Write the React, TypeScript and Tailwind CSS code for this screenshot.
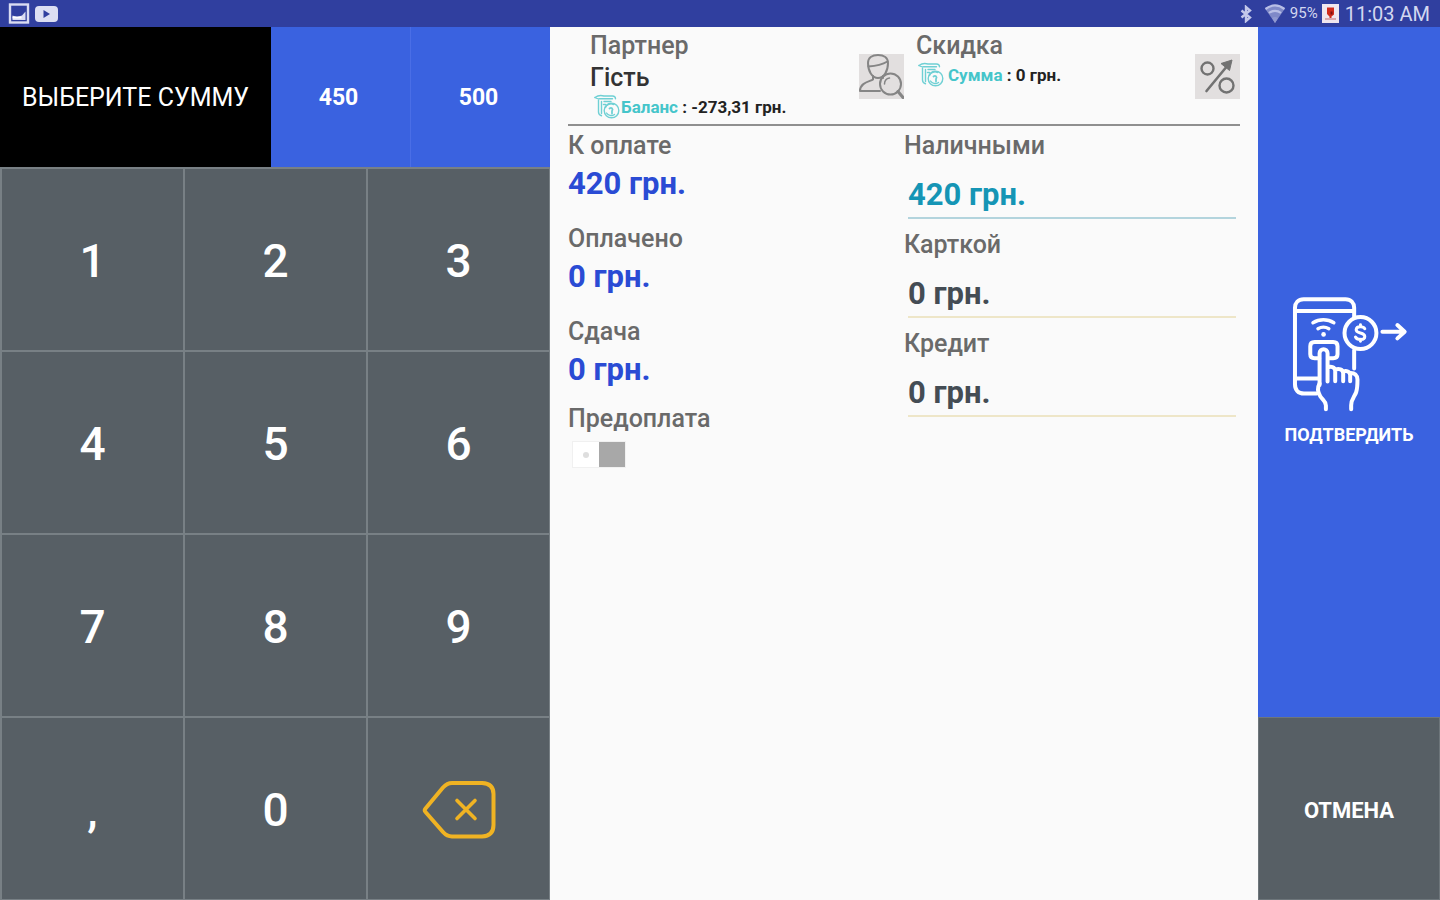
import { useState } from "react";

const keyClass =
  "flex items-center justify-center bg-[#575f65] pt-0.5 text-[46px] leading-none font-medium text-white";

const labelClass = "text-[25px] leading-8 font-medium text-[#6a6a6a]";

function StatusBar() {
  return (
    <header className="flex h-[27px] items-center justify-between bg-[#303f9f] pr-2.5 pl-2 text-[#d3d7f0]">
      <div className="flex items-center gap-1">
        <svg width="22" height="21" viewBox="0 0 22 21" aria-hidden="true">
          <rect x="2" y="1.5" width="18" height="18" fill="none" stroke="#d9dcf2" strokeWidth="2.4" />
          <path d="M4.5 12.5 9 14l5-1.5 3.5-4V17h-13Z" fill="#d9dcf2" />
          <path d="M4.500 14.500h9" stroke="#fff" strokeWidth="2" />
        </svg>
        <svg width="25" height="18" viewBox="0 0 25 18" aria-hidden="true">
          <rect x="1" y="1" width="23" height="16" rx="4" fill="#dcdff3" />
          <path d="M9.500 5v8l6.500-4Z" fill="#303f9f" />
        </svg>
      </div>
      <div className="flex items-center">
        <svg className="mr-2.5" width="16" height="18" viewBox="0 0 16 18" aria-hidden="true">
          <path d="M3.500 5.500 12 12.500 8 16V2l4 3.500-8.500 7" fill="none" stroke="#c3c8ea" strokeWidth="2.400" />
        </svg>
        <svg className="mr-1" width="22" height="20" viewBox="0 0 22 20" aria-hidden="true">
          <path d="M1 4.500C7-.2 15-.2 21 4.500L11 19Z" fill="#7f89c8" />
          <path d="M1.500 5C7.500.5 14.500.5 20.500 5M5 9c3.500-2.800 8.500-2.800 12 0" fill="none" stroke="#b9bfe6" strokeWidth="2.200" />
          <path d="M8 14c2-1.400 4-1.400 6 0l-3 5Z" fill="#8f98d0" />
        </svg>
        <span className="mr-1 text-[15px]">95%</span>
        <svg className="mr-1.5" width="17" height="19" viewBox="0 0 17 19" aria-hidden="true">
          <rect width="17" height="19" fill="#efe6ee" />
          <path d="M5 3.500h7v7l-2.500 2v3h-2v-3L5 10Z" fill="#d02a1c" />
          <path d="M3 14h11v2H3Z" fill="#d9a7ae" />
          <path d="M8.500 7.500h2v3h-2Z" fill="#7a1010" />
        </svg>
        <span className="text-[20px]">11:03 AM</span>
      </div>
    </header>
  );
}

function CoinsIcon() {
  return (
    <svg width="26" height="26" viewBox="0 0 26 26" fill="none" stroke="#6fd0d4" strokeWidth="1.400" strokeLinecap="round" aria-hidden="true">
      <path d="M1 3.500C4 1.200 7 1 10 2h8.500c1.800 0 3 1 3 2.800" />
      <path d="M1 3.500c1.500 1 3 1.500 4.500 1.300h13" />
      <path d="M4.500 6v12c0 2 1 3.200 3 3.700M7.500 7.500v12M10 7.500h7M9.500 10.500h2" />
      <circle cx="17.500" cy="16.500" r="7.300" />
      <path d="M11.500 13.500c1-3 5-4.500 8-3M12.500 19c1.500 2.500 5 3.500 8 1.500" />
      <path d="M15.500 14.500c2-1.500 4 .5 2.500 2.500v2.500" strokeWidth="1.800" />
    </svg>
  );
}

function FindPersonIcon() {
  return (
    <svg width="45" height="45" viewBox="0 0 45 45" fill="none" stroke="#858585" strokeWidth="2" strokeLinecap="round" strokeLinejoin="round" aria-hidden="true">
      <path d="M9 9C9 4 13 1 19 1s10 3 10 8c0 8-4 15-10 15S9 17 9 9Z" />
      <path d="M9.500 12.500c7-.5 13-1.500 19-5" />
      <path d="M14 22v3.500c-3 2-13 3-13 11.500h20M24 22v2" />
      <circle cx="31.500" cy="30" r="10.500" />
      <path d="M25.500 30c0-3 2-5.500 5-6" strokeWidth="1.500" />
      <path d="m39 37.500 5 6" strokeWidth="3" />
    </svg>
  );
}

function DiscountIcon() {
  return (
    <svg width="45" height="45" viewBox="0 0 45 45" fill="none" stroke="#727272" aria-hidden="true">
      <circle cx="12.500" cy="14.500" r="6" strokeWidth="2.400" />
      <circle cx="31.500" cy="31.500" r="7" strokeWidth="2.400" />
      <path d="M11.500 37 33 11" strokeWidth="2.600" strokeLinecap="round" />
      <path d="M37 6 26 9.500l8.500 7Z" fill="#727272" />
    </svg>
  );
}

function PayIcon() {
  return (
    <svg width="123" height="120" viewBox="90 40 370 360" fill="none" stroke="#fff" strokeWidth="12" strokeLinecap="round" strokeLinejoin="round" aria-hidden="true">
      <path d="M289 112V84c0-15-10-26-26-26H137c-16 0-26 11-26 26v230c0 17 10 28 27 28h38" />
      <path d="M111 94h178M111 297h69M289 212v55" />
      <path d="M165 129c19-12 44-12 63 0M180 147c10-6 23-6 33 0" strokeWidth="10" />
      <circle cx="197" cy="164" r="7" fill="#fff" stroke="none" />
      <path d="M184 236h-14c-9 0-13-4-13-12v-24c0-9 4-13 13-13h56c9 0 13 4 13 13v24c0 8-4 12-13 12h-14" />
      <path d="M185 316V221c0-16 24-16 24 0v85M209 264c10-5 22-2 23 9v32M232 270c11-5 23-1 24 10v25M256 276c10-4 20 0 21 10v19M277 280c13-1 22 7 22 20 0 14 0 27-4 38-5 13-15 21-15 39v12" />
      <path d="M185 312c-7 12-6 25 2 38 7 11 17 14 17 28v11" />
      <circle cx="308" cy="160" r="48" />
      <path d="M321 147c-4-7-25-9-26 3-1 13 26 7 26 20 0 12-23 12-28 2M308 135v6M308 179v6" strokeWidth="9" />
      <path d="M374 156h65M419 136l22 20-22 20" />
    </svg>
  );
}

function BackspaceIcon() {
  return (
    <svg width="74" height="60" viewBox="0 0 74 60" fill="none" stroke="#f0b323" strokeLinecap="round" strokeLinejoin="round" aria-hidden="true">
      <path d="M3.500 28.500 21 7.500Q25 3 30 3h30Q71.500 3.500 71.500 14v31Q71.500 56 60 56.500H30q-5 0-9-4.500L3.500 32q-1.500-1.700 0-3.500Z" strokeWidth="4" />
      <path d="m35 20.500 18 18M53 20.500l-18 18" strokeWidth="3.600" />
    </svg>
  );
}

function Total({ label, value }: { label: string; value: string }) {
  return (
    <div>
      <dt className={labelClass}>{label}</dt>
      <dd className="text-[31px] leading-[44px] font-bold text-[#2a4bd4]">{value}</dd>
    </div>
  );
}

function Field({ id, label, initial, tone }: { id: string; label: string; initial: string; tone: string }) {
  const [value, setValue] = useState(initial);
  return (
    <div className="flex flex-col">
      <label htmlFor={id} className={labelClass}>
        {label}
      </label>
      <input
        id={id}
        value={value}
        onChange={(e) => setValue(e.target.value)}
        className={"mx-1 h-[57px] min-w-0 border-b-2 bg-transparent pt-2.5 text-[31px] font-bold outline-none " + tone}
      />
    </div>
  );
}

export default function App() {
  const [prepay, setPrepay] = useState(false);
  return (
    <div className="flex min-h-screen flex-col bg-[#fafafa] font-[Roboto,sans-serif]">
      <StatusBar />
      <main className="grid flex-1 grid-cols-[275fr_354fr_91fr]">
        <section className="flex flex-col">
          <div className="grid h-[140px] grid-cols-[271fr_140fr_139fr] bg-[#3a62e0] text-white">
            <h1 className="flex items-center justify-center bg-black pt-0.5 text-[25px] whitespace-nowrap">ВЫБЕРИТЕ СУММУ</h1>
            <button className="border-r border-[#4a6ee6] pt-0.5 pr-1 text-[23px] font-bold">450</button>
            <button className="pt-0.5 pr-1 text-[23px] font-bold">500</button>
          </div>
          <div className="grid flex-1 grid-cols-3 grid-rows-4 gap-0.5 bg-[#788085] p-0.5 pr-px pb-px">
            {["1", "2", "3", "4", "5", "6", "7", "8", "9", ",", "0"].map((k) => (
              <button key={k} className={keyClass}>
                {k}
              </button>
            ))}
            <button className={keyClass} aria-label="Удалить">
              <BackspaceIcon />
            </button>
          </div>
        </section>

        <section className="px-[18px] pt-[3px]">
          <div className="grid grid-cols-2 border-b-2 border-[#8f8f8f] pb-1">
            <div className="flex items-start justify-between pl-[22px]">
              <div>
                <h2 className={labelClass}>Партнер</h2>
                <p className="text-[25px] leading-8 font-medium text-[#333]">Гість</p>
                <p className="flex h-[26px] items-center gap-px pl-1 text-[17px] leading-6 font-bold text-[#222]">
                  <CoinsIcon />
                  <span>
                    <span className="text-[#45c5ca]">Баланс</span> : -273,31 грн.
                  </span>
                </p>
              </div>
              <button className="mt-6 bg-[#e2dfdf]" aria-label="Найти партнера">
                <FindPersonIcon />
              </button>
            </div>
            <div className="flex items-start justify-between pl-3">
              <div>
                <h2 className={labelClass}>Скидка</h2>
                <p className="flex h-[26px] items-center gap-1 pl-0.5 text-[17px] leading-6 font-bold text-[#222]">
                  <CoinsIcon />
                  <span>
                    <span className="text-[#45c5ca]">Сумма</span> : 0 грн.
                  </span>
                </p>
              </div>
              <button className="mt-6 bg-[#e2dfdf]" aria-label="Выбрать скидку">
                <DiscountIcon />
              </button>
            </div>
          </div>

          <div className="grid grid-cols-2 pt-1">
            <div>
              <dl className="flex flex-col gap-[17px]">
                <Total label="К оплате" value="420 грн." />
                <Total label="Оплачено" value="0 грн." />
                <Total label="Сдача" value="0 грн." />
              </dl>
              <div className="mt-[11px] flex flex-col items-start">
                <label htmlFor="prepay" className={labelClass}>
                  Предоплата
                </label>
                <div className="mt-1.5 ml-1 flex">
                  <input
                    id="prepay"
                    type="checkbox"
                    role="switch"
                    checked={prepay}
                    onChange={(e) => setPrepay(e.target.checked)}
                    className="grid h-[27px] w-[54px] appearance-none grid-cols-2 place-items-center border border-[#f0f0f0] bg-white bg-[linear-gradient(#a8a8a8,#a8a8a8)] bg-[length:50%_100%] bg-right bg-no-repeat before:size-1.5 before:rounded-full before:bg-[#dedede] checked:bg-left"
                  />
                </div>
              </div>
            </div>
            <div className="flex flex-col gap-2.5">
              <Field id="cash" label="Наличными" initial="420 грн." tone="border-[#b3d4dd] text-[#1595b5]" />
              <Field id="card" label="Карткой" initial="0 грн." tone="border-[#eee6c8] text-[#444c54]" />
              <Field id="credit" label="Кредит" initial="0 грн." tone="border-[#eee6c8] text-[#444c54]" />
            </div>
          </div>
        </section>

        <aside className="flex flex-col text-white">
          <button className="flex flex-1 flex-col items-center justify-center gap-2.5 bg-[#3a62e0] pb-1 text-lg leading-6 font-bold">
            <PayIcon />
            ПОДТВЕРДИТЬ
          </button>
          <button className="h-[183px] border border-[#6e767b] bg-[#575f65] pt-1 text-[22px] font-bold">ОТМЕНА</button>
        </aside>
      </main>
    </div>
  );
}
